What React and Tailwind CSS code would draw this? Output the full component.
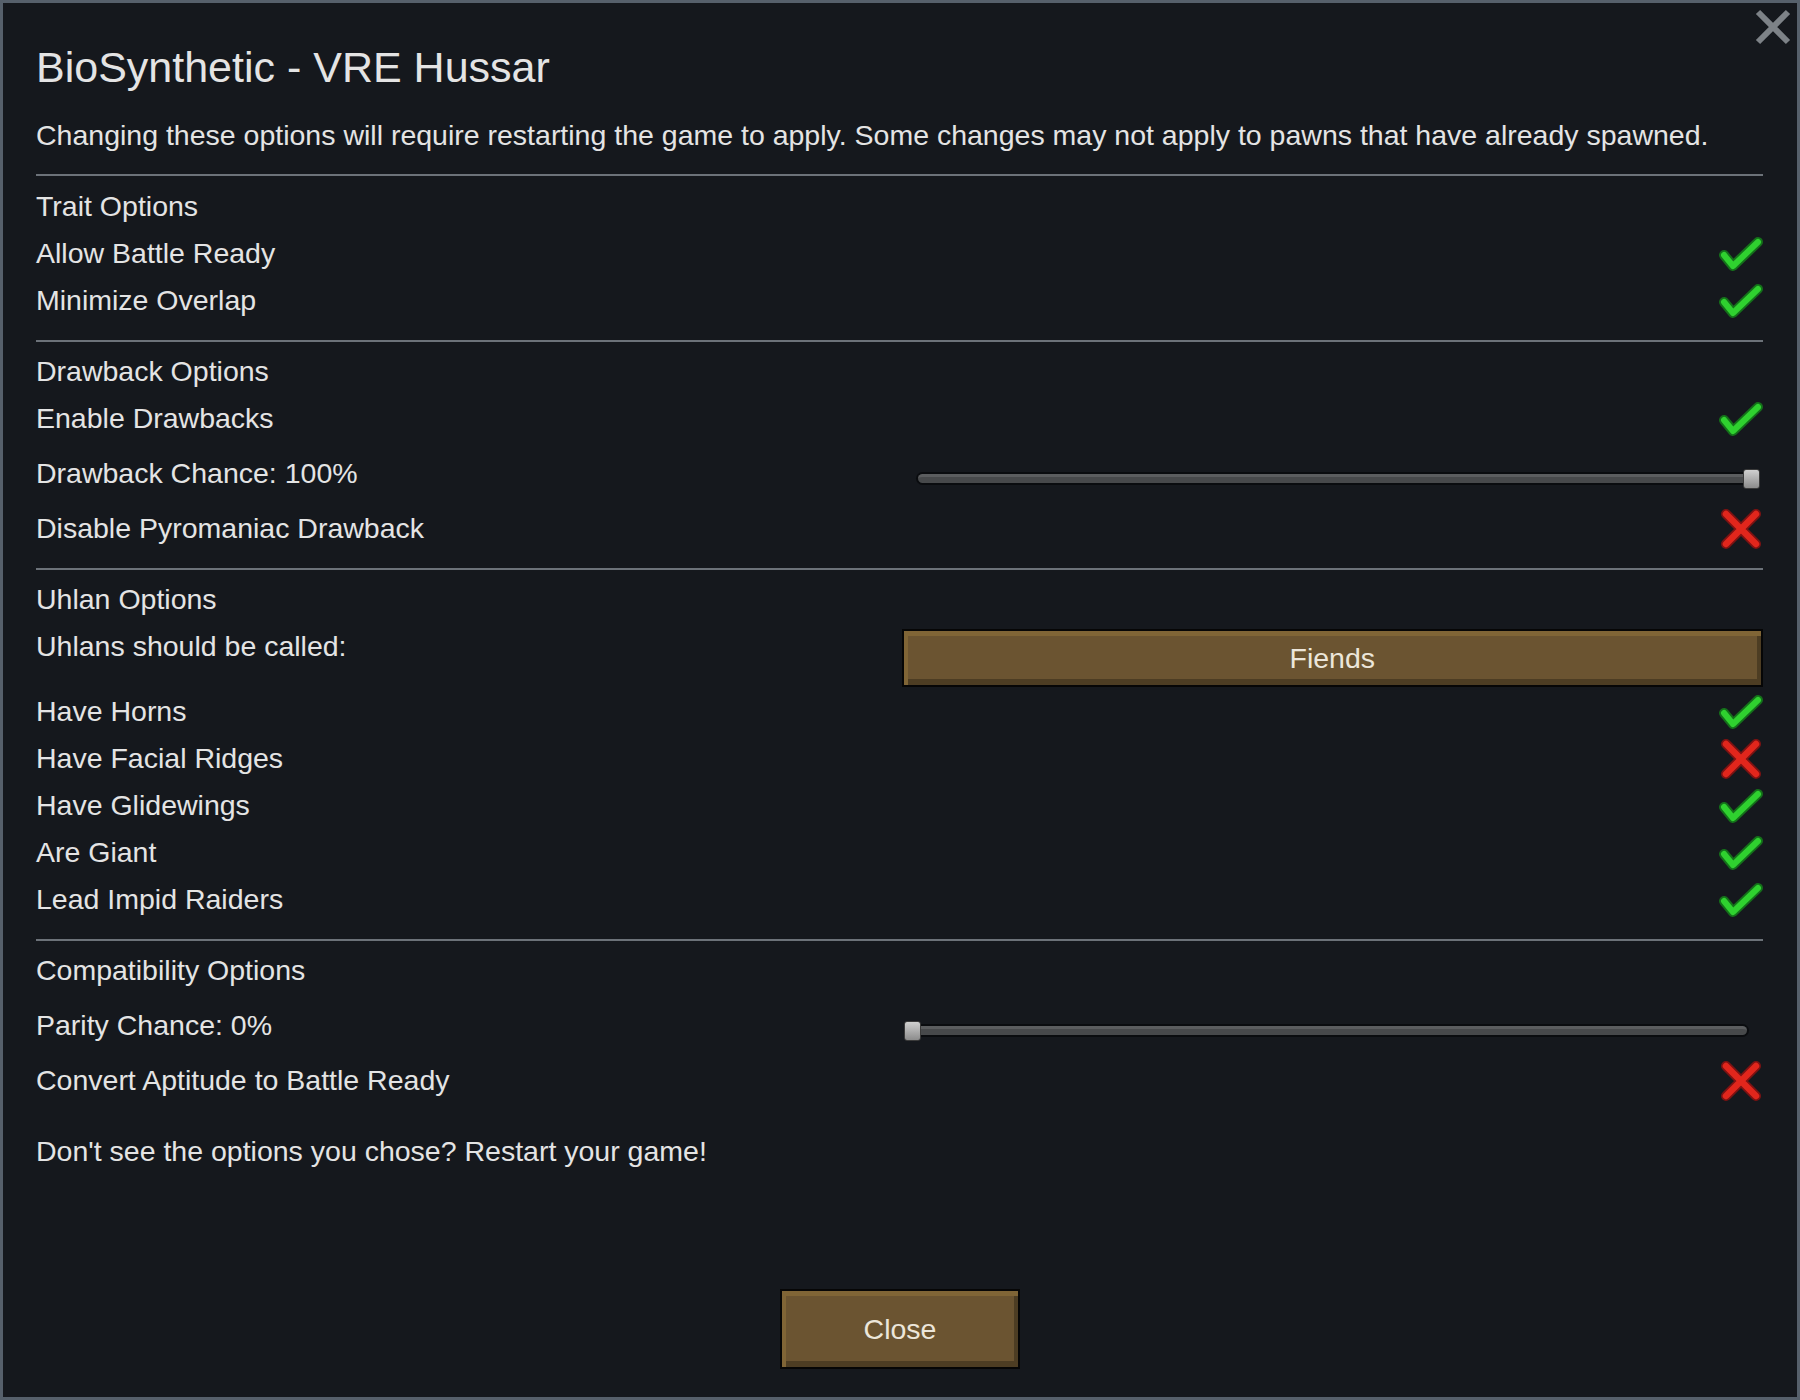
import React from "react";

function Check() {
  return (
    <svg width="44" height="38" viewBox="0 0 44 38" className="shrink-0">
      <polyline points="5,20 14,31 39,7" fill="none" stroke="#14701a" strokeWidth="10" strokeLinecap="round" strokeLinejoin="round" />
      <polyline points="5,20 14,31 39,7" fill="none" stroke="#2fd12f" strokeWidth="6" strokeLinecap="round" strokeLinejoin="round" />
    </svg>
  );
}

function Cross() {
  return (
    <svg width="44" height="40" viewBox="0 0 44 40" className="shrink-0">
      <g fill="none" strokeLinecap="round">
        <path d="M7 5 L37 35 M37 5 L7 35" stroke="#7d1212" strokeWidth="10" />
        <path d="M7 5 L37 35 M37 5 L7 35" stroke="#e1261c" strokeWidth="6.5" />
      </g>
    </svg>
  );
}

function Divider({ className = "" }) {
  return <div className={"h-[2px] bg-[#6c7279] " + className} />;
}

function Row({ label, right }) {
  return (
    <div className="flex h-[47px] items-center justify-between">
      <span>{label}</span>
      {right}
    </div>
  );
}

function Slider({ value, className = "" }) {
  const atEnd = value >= 100;
  return (
    <div className={"relative flex h-[20px] items-center " + className}>
      <div className="h-[13px] w-full rounded-full bg-[#0a0c0f] p-[2px]">
        <div className="h-full w-full rounded-full bg-[#47494b] border-t-[3px] border-[#5b5d5f]" />
      </div>
      <div
        className={
          "absolute top-0 h-[20px] w-[17px] rounded-[3px] bg-gradient-to-b from-[#d0d0d0] to-[#8c8c8c] border border-[#3a3a3a] " +
          (atEnd ? "right-0" : "left-0")
        }
      />
    </div>
  );
}

function SliderRow({ label, value, sliderClass }) {
  return (
    <div className="flex h-[63px] items-center">
      <span className="w-1/2">{label}</span>
      <div className="flex w-1/2 items-center pt-[10px]">
        <Slider value={value} className={sliderClass} />
      </div>
    </div>
  );
}

function WoodButton({ children, className = "" }) {
  return (
    <div
      className={
        "flex items-center justify-center border-[2px] border-[#060606] bg-[#6b5431] text-[#ece6da] shadow-[inset_4px_5px_0_#806536,inset_-4px_-6px_0_#4d3d23] " +
        className
      }
    >
      {children}
    </div>
  );
}

export default function App() {
  return (
    <div className="relative h-[1400px] w-[1800px] border-[3px] border-[#56606b] bg-[#15181d] font-['Liberation_Sans',Arial,sans-serif] text-[28.5px] text-[#e4e4e4]">
      <svg className="absolute right-[5px] top-[5px]" width="38" height="38" viewBox="0 0 38 38">
        <path d="M4 4 L34 34 M34 4 L4 34" stroke="#7d8287" strokeWidth="6" />
      </svg>

      <div className="pl-[33px] pr-[34px] pt-[40px]">
        <h1 className="text-[43px] leading-[48px]">BioSynthetic - VRE Hussar</h1>
        <p className="mt-[21px] leading-[47px]">
          Changing these options will require restarting the game to apply. Some changes may not apply to pawns that have already spawned.
        </p>
        <Divider className="mt-[15px] mb-[7px]" />

        <Row label="Trait Options" />
        <Row label="Allow Battle Ready" right={<Check />} />
        <Row label="Minimize Overlap" right={<Check />} />
        <Divider className="mt-[16px] mb-[6px]" />

        <Row label="Drawback Options" />
        <Row label="Enable Drawbacks" right={<Check />} />
        <SliderRow label="Drawback Chance: 100%" value={100} sliderClass="ml-[16px] mr-[3px] w-full" />
        <Row label="Disable Pyromaniac Drawback" right={<Cross />} />
        <Divider className="mt-[16px] mb-[6px]" />

        <Row label="Uhlan Options" />
        <div className="flex h-[65px] items-start">
          <span className="flex h-[47px] w-1/2 items-center">Uhlans should be called:</span>
          <div className="w-1/2 pl-[2px] pt-[6px]">
            <WoodButton className="h-[58px] w-full">Fiends</WoodButton>
          </div>
        </div>
        <Row label="Have Horns" right={<Check />} />
        <Row label="Have Facial Ridges" right={<Cross />} />
        <Row label="Have Glidewings" right={<Check />} />
        <Row label="Are Giant" right={<Check />} />
        <Row label="Lead Impid Raiders" right={<Check />} />
        <Divider className="mt-[16px] mb-[6px]" />

        <Row label="Compatibility Options" />
        <SliderRow label="Parity Chance: 0%" value={0} sliderClass="ml-[4px] mr-[14px] w-full" />
        <Row label="Convert Aptitude to Battle Ready" right={<Cross />} />

        <div className="mt-[24px] flex h-[47px] items-center">Don't see the options you chose? Restart your game!</div>
      </div>

      <div className="mt-[114px] flex justify-center">
        <WoodButton className="h-[80px] w-[240px]">Close</WoodButton>
      </div>
    </div>
  );
}
